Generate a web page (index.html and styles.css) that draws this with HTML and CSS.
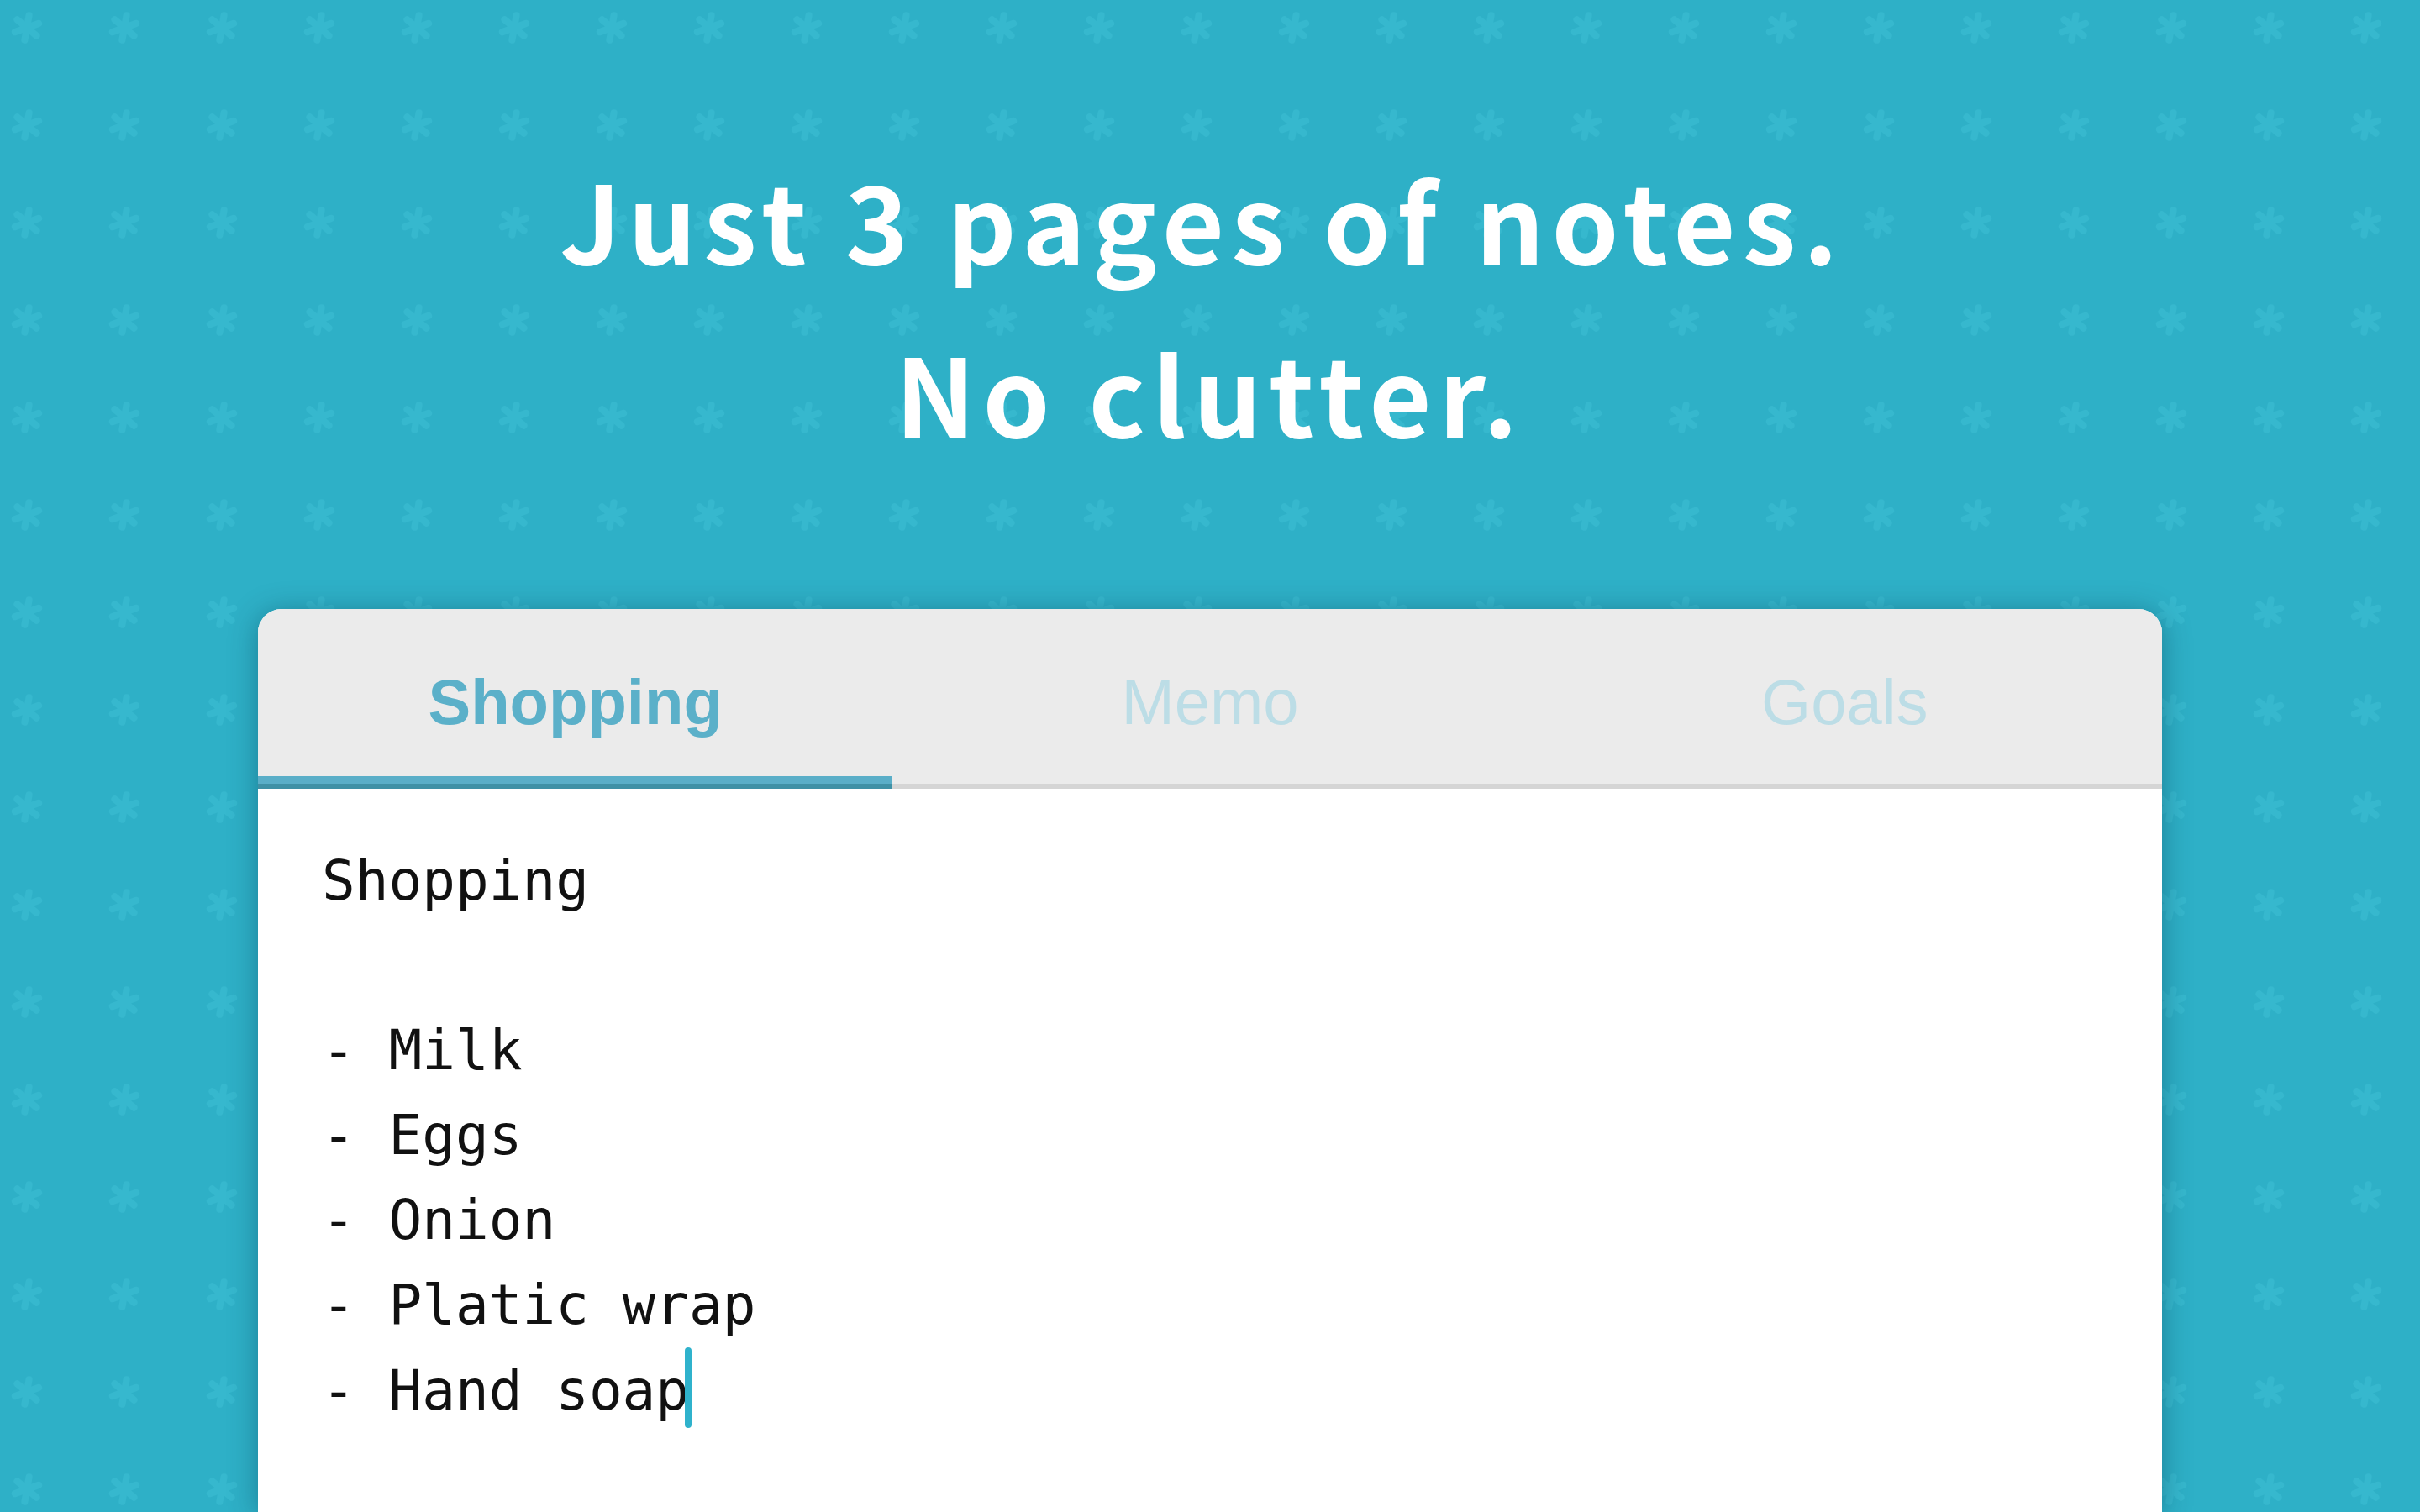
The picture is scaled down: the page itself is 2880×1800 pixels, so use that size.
FILE: index.html
```html
<!DOCTYPE html>
<html lang="en">
  <head>
    <meta charset="UTF-8" />
    <meta name="viewport" content="width=device-width, initial-scale=1.0" />
    <title>3 pages of notes</title>
    <link rel="stylesheet" href="styles.css">
  </head>
  <body>
    <div class="page">
      <h1 class="headline">
        <span>Just 3 pages of notes.</span>
        <span>No clutter.</span>
      </h1>

      <div class="window">
        <div class="tabs">
          <div class="tab active">Shopping</div>
          <div class="tab">Memo</div>
          <div class="tab">Goals</div>
        </div>

        <div class="note">
          <div class="line">Shopping</div>
          <div class="line">&nbsp;</div>
          <div class="line">- Milk</div>
          <div class="line">- Eggs</div>
          <div class="line">- Onion</div>
          <div class="line">- Platic wrap</div>
          <div class="line">- Hand soap<span class="caret"></span></div>
        </div>
      </div>
    </div>
  </body>
</html>
```

FILE: styles.css
```css
* {
  margin: 0;
  padding: 0;
  box-sizing: border-box;
}
body {
  overflow: hidden;
}
.page {
  height: 100vh;
  overflow: hidden;
  background-color: #2eb0c7;
  background-image: url("data:image/svg+xml,%3Csvg xmlns='http://www.w3.org/2000/svg' width='116' height='116'%3E%3Cg transform='translate(32 33) rotate(10)' stroke='%2336b8ce' stroke-width='8' stroke-linecap='round'%3E%3Cline x1='0' y1='-15' x2='0' y2='15'/%3E%3Cline x1='-13' y1='-7.5' x2='13' y2='7.5'/%3E%3Cline x1='-13' y1='7.5' x2='13' y2='-7.5'/%3E%3C/g%3E%3C/svg%3E");
  background-size: 116px 116px;
  display: flex;
  flex-direction: column;
  align-items: center;
}
.headline {
  padding-top: 157px;
  display: flex;
  flex-direction: column;
  align-items: center;
  font-family: "Noto Sans CJK JP", "Noto Sans", sans-serif;
  font-weight: 700;
  font-size: 128px;
  line-height: 206px;
  letter-spacing: 8.4px;
  color: #fff;
}
.headline span:first-child {
  margin-right: 18px;
}
.window {
  margin-top: 156px;
  width: 2266px;
  flex: 1;
  background: #fff;
  border-radius: 28px 28px 0 0;
  box-shadow: 0 4px 34px rgba(0, 50, 70, 0.4);
  overflow: hidden;
}
.tabs {
  display: flex;
  background: #ebebeb;
}
.tab {
  flex: 1;
  height: 214px;
  padding-top: 6px;
  display: flex;
  justify-content: center;
  align-items: center;
  font-family: "Liberation Sans", Arial, sans-serif;
  font-size: 76px;
  color: #bcdde6;
  box-shadow: inset 0 -6px #d5d5d5;
}
.tab.active {
  font-weight: 700;
  color: #5bb0c9;
  box-shadow: inset 0 -6px #3f91a6, inset 0 -15px #5aaec8;
}
.note {
  padding: 59px 76px;
  font-family: "DejaVu Sans Mono", "Liberation Mono", monospace;
  font-size: 66px;
  line-height: 101px;
  color: #111;
}
.line {
  white-space: pre;
}
.caret {
  display: inline-block;
  width: 8px;
  height: 96px;
  margin-left: -5px;
  vertical-align: -22px;
  border-radius: 4px;
  background: #2fb2cc;
}
```
